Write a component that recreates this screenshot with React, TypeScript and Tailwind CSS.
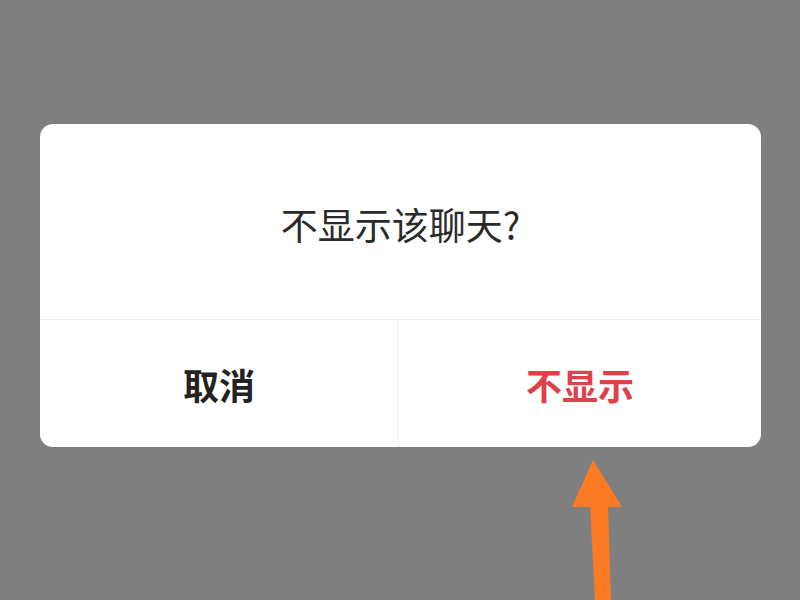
export default function App() {
  const font = { fontFamily: '"Noto Sans CJK SC", "Noto Sans", sans-serif' };
  return (
    <div className="relative w-[800px] h-[600px] bg-[#7f7f7f] overflow-hidden" style={font}>
      <div className="pt-[124px] pl-[40px]">
        <div className="w-[721px] h-[323px] bg-white rounded-[13px] flex flex-col overflow-hidden">
          <div className="h-[196px] flex items-center justify-center border-b border-[#f0f0f0]">
            <span className="text-[37px] leading-none text-[#2a2a2a] pt-[6px]">不显示该聊天?</span>
          </div>
          <div className="flex-1 flex">
            <div className="w-[359px] flex items-center justify-center border-r border-[#f0f0f0]">
              <span className="text-[36px] leading-none font-bold text-[#222222]">取消</span>
            </div>
            <div className="flex-1 flex items-center justify-center">
              <span className="text-[36px] leading-none font-bold text-[#dd424a]">不显示</span>
            </div>
          </div>
        </div>
      </div>
      <svg className="absolute left-0 top-0" width="800" height="600" viewBox="0 0 800 600">
        <polygon points="593,460 622,507 572,507" fill="#fb7a24" />
        <polygon points="590,505 608,505 611,600 595,600" fill="#fb7a24" />
      </svg>
    </div>
  );
}
